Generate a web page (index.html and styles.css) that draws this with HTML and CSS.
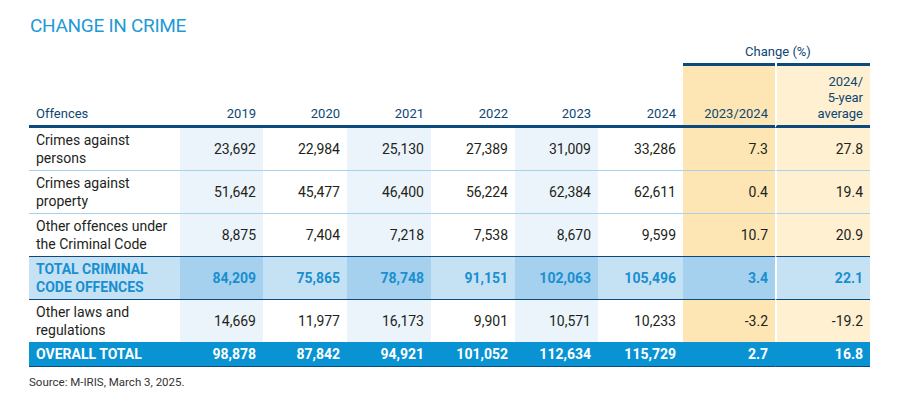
FILE: index.html
```html
<!DOCTYPE html>
<html lang="en">
<head>
<meta charset="utf-8">
<title>Change in crime</title>
<link rel="stylesheet" href="styles.css">
</head>
<body>
<div class="page">
  <h1 class="title">CHANGE IN CRIME</h1>
  <table class="crime">
    <colgroup>
      <col class="c-label"><col class="c-num83"><col class="c-num84"><col class="c-num84"><col class="c-num84"><col class="c-num83"><col class="c-num85"><col class="c-chg1"><col class="c-chg2">
    </colgroup>
    <thead>
      <tr class="group">
        <th colspan="7" class="blank"></th>
        <th colspan="2" class="change"><span class="change-label">Change (%)</span></th>
      </tr>
      <tr class="cols">
        <th class="label">Offences</th>
        <th>2019</th><th>2020</th><th>2021</th><th>2022</th><th>2023</th><th>2024</th>
        <th class="chg1">2023/2024</th>
        <th class="chg2">2024/<br>5-year<br>average</th>
      </tr>
    </thead>
    <tbody>
      <tr class="row light">
        <td class="label">Crimes against<br>persons</td>
        <td>23,692</td><td>22,984</td><td>25,130</td><td>27,389</td><td>31,009</td><td>33,286</td>
        <td class="chg1">7.3</td><td class="chg2">27.8</td>
      </tr>
      <tr class="row light">
        <td class="label">Crimes against<br>property</td>
        <td>51,642</td><td>45,477</td><td>46,400</td><td>56,224</td><td>62,384</td><td>62,611</td>
        <td class="chg1">0.4</td><td class="chg2">19.4</td>
      </tr>
      <tr class="row dark">
        <td class="label">Other offences under<br>the Criminal Code</td>
        <td>8,875</td><td>7,404</td><td>7,218</td><td>7,538</td><td>8,670</td><td>9,599</td>
        <td class="chg1">10.7</td><td class="chg2">20.9</td>
      </tr>
      <tr class="row total">
        <td class="label">TOTAL CRIMINAL<br>CODE OFFENCES</td>
        <td>84,209</td><td>75,865</td><td>78,748</td><td>91,151</td><td>102,063</td><td>105,496</td>
        <td class="chg1">3.4</td><td class="chg2">22.1</td>
      </tr>
      <tr class="row plain">
        <td class="label">Other laws and<br>regulations</td>
        <td>14,669</td><td>11,977</td><td>16,173</td><td>9,901</td><td>10,571</td><td>10,233</td>
        <td class="chg1">-3.2</td><td class="chg2">-19.2</td>
      </tr>
      <tr class="row overall">
        <td class="label">OVERALL TOTAL</td>
        <td>98,878</td><td>87,842</td><td>94,921</td><td>101,052</td><td>112,634</td><td>115,729</td>
        <td class="chg1">2.7</td><td class="chg2">16.8</td>
      </tr>
    </tbody>
  </table>
  <p class="source">Source: M-IRIS, March 3, 2025.</p>
</div>
</body>
</html>
```

FILE: styles.css
```css
html, body {
  margin: 0;
  padding: 0;
  background: #ffffff;
}

body {
  font-family: Roboto, "Liberation Sans", sans-serif;
  color: #231f20;
}

.page {
  padding: 14px 0 0 29px;
}

.title {
  margin: 0 0 0 1px;
  font-size: 19px;
  line-height: 24px;
  font-weight: 400;
  color: #1f9ad6;
  letter-spacing: -0.3px;
}

.crime {
  margin-top: 6px;
  width: 841px;
  table-layout: fixed;
  border-collapse: separate;
  border-spacing: 0;
  font-size: 14px;
}

.c-label { width: 151px; }
.c-num83 { width: 83px; }
.c-num84 { width: 84px; }
.c-num85 { width: 85px; }
.c-chg1 { width: 92px; }
.c-chg2 { width: 95px; }

.crime th,
.crime td {
  padding: 0 7px 0 0;
  text-align: right;
  vertical-align: middle;
}

.crime .label {
  padding-left: 7px;
  text-align: left;
}

/* header */
.group th {
  padding: 0;
  font-size: 13px;
  line-height: 16px;
  font-weight: 400;
  color: #0d4673;
}

.group .change {
  text-align: center;
  padding-bottom: 3px;
  position: relative;
}

.group .change::after {
  content: "";
  position: absolute;
  left: 0;
  right: 0;
  bottom: -3px;
  height: 3px;
  background: linear-gradient(90deg, #0c4a7c 0 92px, #ffffff 92px 94px, #0c4a7c 94px);
}

.change-label {
  display: inline-block;
  padding-left: 3px;
}

.cols th {
  font-size: 13px;
  line-height: 16px;
  font-weight: 400;
  color: #0d4673;
  vertical-align: bottom;
  padding-bottom: 3px;
  padding-top: 11px;
  border-bottom: 3px solid #0c4a7c;
}

.cols .chg1 { background: #fde6b3; }
.cols .chg2 { background: #fef0d1; border-left: 2px solid #ffffff; }

/* body rows */
.row td {
  line-height: 18px;
  padding-top: 3px;
  padding-bottom: 3px;
  height: 36px;
}

.row td:nth-child(2),
.row td:nth-child(4),
.row td:nth-child(6) {
  background: #ebf4fb;
}

.row .chg1 { background: #fde6b3; }
.row .chg2 { background: #fef0d1; border-left: 2px solid #ffffff; }

.light td { border-bottom: 1px solid #a9d2ea; }
.dark td { border-bottom: 1px solid #0c4a7c; }

.total td {
  background: #c5e2f5;
  color: #1a8fd0;
  font-weight: 700;
  border-bottom: 1px solid #0c4a7c;
}

.row.total td:nth-child(2),
.row.total td:nth-child(4),
.row.total td:nth-child(6),
.row.total .chg1 {
  background: #a5d1ee;
}

.row.total .chg2 { background: #c5e2f5; }

.overall td {
  height: 18px;
  background: #0993d3;
  color: #ffffff;
  font-weight: 700;
  border-bottom: 1px solid #0c4a7c;
}

.row.overall td:nth-child(2),
.row.overall td:nth-child(4),
.row.overall td:nth-child(6),
.row.overall .chg1,
.row.overall .chg2 {
  background: #0993d3;
}

.row.overall .chg2 { border-left-color: #0993d3; }

.source {
  margin: 7px 0 0 0;
  font-size: 11.5px;
  line-height: 16px;
  color: #333333;
}
```
